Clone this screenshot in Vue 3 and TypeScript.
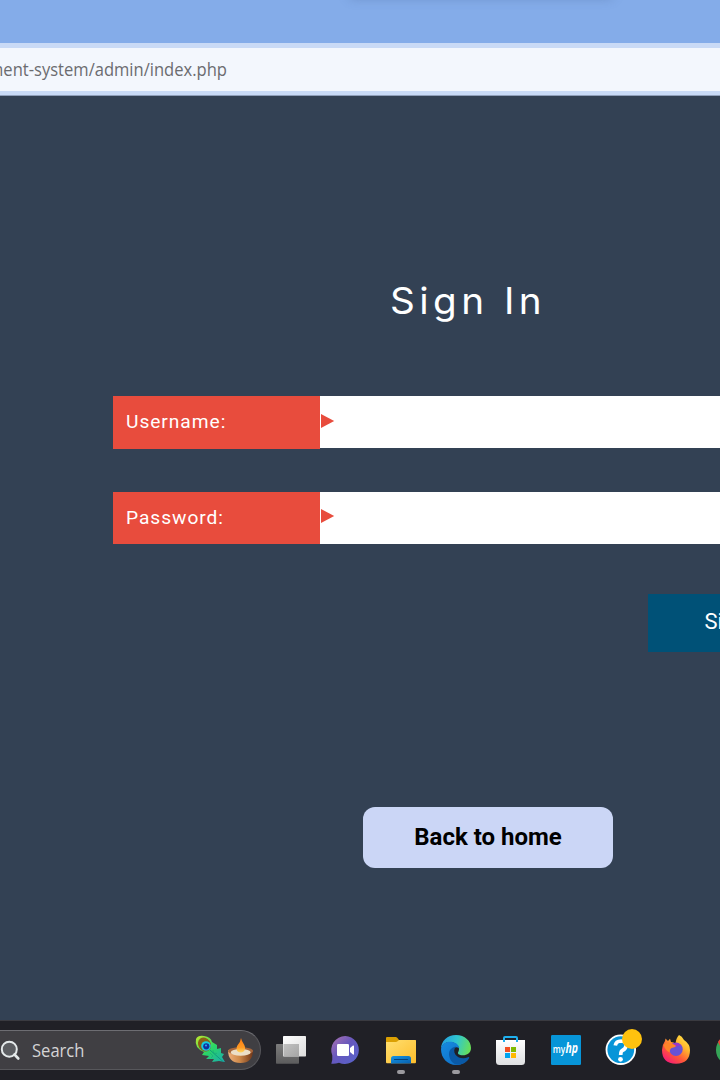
<script setup lang="ts">
interface Field {
  id: string
  label: string
}

const fields: Field[] = [
  { id: 'username', label: 'Username:' },
  { id: 'password', label: 'Password:' },
]
const url = 'ment-system/admin/index.php'
</script>

<template>
  <div class="screen">
    <header class="browser">
      <div class="tabs"><div class="tab-shadow"></div></div>
      <div class="address"><span class="url">{{ url }}</span></div>
    </header>

    <main class="page">
      <h1 class="title">Sign In</h1>
      <form class="form">
        <div v-for="f in fields" :key="f.id" class="field" :class="f.id">
          <label class="label">{{ f.label }}</label>
          <div class="input">
            <svg class="arrow" width="14" height="14" viewBox="0 0 14 14"><path d="M0 0L13.2 7L0 14Z" fill="#e84c3d" /></svg>
          </div>
        </div>
        <div class="submit">Sign In</div>
      </form>
      <div class="home">Back to home</div>
    </main>

    <footer class="taskbar">
      <div class="search">
        <svg class="lens" width="22" height="22" viewBox="0 0 22 22">
          <circle cx="9.3" cy="9.2" r="7.5" fill="#5b5d61" stroke="#e4e9ea" stroke-width="2" />
          <path d="M14.5 14.5L18.3 18.5" stroke="#e4e9ea" stroke-width="2.6" stroke-linecap="round" />
        </svg>
        <span class="search-text">Search</span>
        <svg class="festive" width="60" height="32" viewBox="194 1034 60 32">
          <defs>
            <linearGradient id="feather" x1="0" y1="0" x2="1" y2="1">
              <stop offset="0" stop-color="#c3e82a" /><stop offset=".5" stop-color="#2bd765" /><stop offset="1" stop-color="#1aa9b0" />
            </linearGradient>
            <linearGradient id="bowl" x1="0" y1="0" x2="1" y2="0">
              <stop offset="0" stop-color="#eeb07c" /><stop offset=".45" stop-color="#cf8a4b" /><stop offset="1" stop-color="#713719" />
            </linearGradient>
            <linearGradient id="flame" x1="0" y1="0" x2="0" y2="1">
              <stop offset="0" stop-color="#ff7a10" /><stop offset=".65" stop-color="#ff9a24" /><stop offset="1" stop-color="#ffd862" />
            </linearGradient>
          </defs>
          <path d="M196 1039Q198 1035 204 1036Q211 1037 212 1042L217 1045L217 1049L221 1048L221 1053L224 1054L222 1057L225 1062L219 1061L212 1062L214 1059L206 1059L209 1056L202 1055L204 1052Q194 1048 196 1039Z" fill="url(#feather)" />
          <path d="M210 1050L223 1061.5" stroke="#0c9a7c" stroke-width=".9" fill="none" />
          <path d="M213 1050L213.5 1053L217 1053.5M210 1053L213 1056L211 1058" stroke="#17a878" stroke-width=".6" fill="none" />
          <ellipse cx="204.5" cy="1044.5" rx="6.2" ry="7.2" transform="rotate(-35 204.5 1044.5)" fill="#8a5f16" />
          <circle cx="206" cy="1046" r="4.8" fill="#16cbe0" />
          <circle cx="206.3" cy="1046.3" r="3.1" fill="#132d9c" />
          <circle cx="206" cy="1045.5" r="1.1" fill="#28a5eb" />
          <path d="M228 1050Q228 1063 240.5 1063Q253 1063 253 1050Z" fill="url(#bowl)" />
          <ellipse cx="240.5" cy="1051" rx="12.5" ry="3.8" fill="#a8663a" />
          <ellipse cx="240.7" cy="1052.4" rx="10" ry="3.3" fill="#ecdfc8" />
          <path d="M241 1038Q241.8 1041.5 244 1044.5C246.500 1048.500 244.500 1052.500 240.8 1052.500C236.500 1052.500 235.500 1048.500 237.700 1045Q240.5 1042 241 1038Z" fill="url(#flame)" />
        </svg>
      </div>

      <svg class="app" viewBox="0 0 55 60">
        <defs>
          <linearGradient id="pane" x1="0" y1="0" x2="1" y2="1"><stop stop-color="#fff" /><stop offset="1" stop-color="#dcdcdc" /></linearGradient>
          <linearGradient id="paneBack" x1="0" y1="0" x2="0" y2="1"><stop stop-color="#7c7c7c" /><stop offset="1" stop-color="#5c5c5d" /></linearGradient>
          <linearGradient id="overlap" x1="0" y1="0" x2="1" y2="1"><stop stop-color="#c2c2c2" /><stop offset="1" stop-color="#a6a6a6" /></linearGradient>
        </defs>
        <rect x="12" y="24" width="23" height="19.7" rx=".7" fill="url(#paneBack)" />
        <rect x="19" y="16" width="23" height="20.5" rx=".7" fill="url(#pane)" />
        <path d="M19.5 24H35V36H19.5Z" fill="url(#overlap)" />
      </svg>

      <svg class="app" viewBox="0 0 55 60">
        <defs><linearGradient id="chat" x1="0" y1="0" x2="1" y2="1"><stop stop-color="#b073b0" /><stop offset=".45" stop-color="#6657bd" /><stop offset="1" stop-color="#5664cb" /></linearGradient></defs>
        <path d="M26.3 16A14 14 0 1 1 20 42.7Q16 44.2 12.3 43.7Q13.7 40.5 13.3 35.4A14 14 0 0 1 26.3 16Z" fill="url(#chat)" />
        <rect x="18" y="24" width="12" height="12" rx="1.3" fill="#fff" />
        <path d="M31 28L34 25.5Q35 25.2 35 26V34Q35 35 34 34.5L31 32Z" fill="#fff" />
      </svg>

      <svg class="app" viewBox="0 0 55 60">
        <defs>
          <linearGradient id="folder" x1="0" y1="0" x2="1" y2="1"><stop stop-color="#ffdf70" /><stop offset="1" stop-color="#fdbd2b" /></linearGradient>
          <linearGradient id="dock" x1="0" y1="0" x2="1" y2="1"><stop stop-color="#1594e3" /><stop offset="1" stop-color="#0860ae" /></linearGradient>
        </defs>
        <path d="M12 18Q12 17 13 17H22Q23 17 25 20H41Q42 20 42 21V30H12Z" fill="#dba003" />
        <path d="M12 22H22Q23 22 25 20H41Q42 20 42 21V42Q42 43.3 41 43.3H13Q12 43.3 12 42Z" fill="url(#folder)" />
        <path d="M17 43.5V38.5Q17 36 19.5 36H34.5Q37 36 37 38.5V43.5Z" fill="url(#dock)" />
        <path d="M20.5 39.5H33.5" stroke="#06427b" stroke-width="1" stroke-linecap="round" />
        <rect x="23" y="50" width="8" height="4" rx="2" fill="#9b9a9f" />
      </svg>

      <svg class="app" viewBox="0 0 55 60">
        <defs>
          <linearGradient id="edgeTop" x1="0" y1=".3" x2="1" y2=".5"><stop stop-color="#239ee0" /><stop offset=".5" stop-color="#30c6d0" /><stop offset="1" stop-color="#67df59" /></linearGradient>
          <linearGradient id="edgeLeft" x1="0" y1="0" x2=".8" y2="1"><stop stop-color="#168be0" /><stop offset="1" stop-color="#0f6fc6" /></linearGradient>
        </defs>
        <path d="M12 29C12 21 18.5 15 27 15C36 15 42 21 42 28C42 33 38 35.3 34 35.3C29.5 35.3 28 33.5 29.5 31.5C31.5 28 28 22 21 22C16 22 13 25 12 29Z" fill="url(#edgeTop)" />
        <path d="M12 29C13 24 16.5 21.8 21 21.8C25.5 21.8 29.5 24 30.3 28C26 25.8 23.7 28.5 23.7 31.5C23.7 37 29 42 36 42.2C33 44.2 30.5 45 27 45C18.5 45 12 38.2 12 29Z" fill="url(#edgeLeft)" />
        <path d="M27 26.5C21.5 27.5 19.5 31 20.2 36C21 41 25 44.8 29 44.8C34.5 44.3 38 42 40.2 38C40.5 37 40 36.8 39 37.2C34.5 39.3 29.3 38.2 26.5 34.7C24.7 32 24.7 29 27 26.5Z" fill="#0a59a6" />
        <rect x="23" y="50" width="8" height="4" rx="2" fill="#9b9a9f" />
      </svg>

      <svg class="app" viewBox="0 0 55 60">
        <defs><linearGradient id="bag" x1="0" y1="0" x2="0" y2="1"><stop stop-color="#fff" /><stop offset="1" stop-color="#dedfe1" /></linearGradient></defs>
        <path d="M12 20H41V41.5Q41 45 37.5 45H15.5Q12 45 12 41.5Z" fill="url(#bag)" />
        <path d="M20 22V18Q20 17 21 17H32Q33 17 33 18V22" fill="none" stroke="#1fb0ee" stroke-width="2" />
        <path d="M21 27H26V32H21Z" fill="#f25022" /><path d="M27 27H32V32H27Z" fill="#7fba00" />
        <path d="M21 33H26V38H21Z" fill="#00a4ef" /><path d="M27 33H32V38H27Z" fill="#ffb900" />
      </svg>

      <svg class="app" viewBox="0 0 55 60">
        <rect x="12" y="15" width="30" height="30" rx="1.2" fill="#0795d8" />
        <text x="13.7" y="33" class="my" textLength="12.5" lengthAdjust="spacingAndGlyphs">my</text>
        <text x="26.5" y="33.3" class="hp" textLength="12.5" lengthAdjust="spacingAndGlyphs">hp</text>
      </svg>

      <svg class="app" viewBox="0 0 55 60">
        <circle cx="26.8" cy="29.7" r="15.2" fill="#fff" />
        <circle cx="26.8" cy="29.7" r="13.4" fill="#0795d8" />
        <path d="M21.3 25.5Q22 21 27 21Q32.5 21.2 32 26Q31.7 28.8 28.7 30.2Q26.7 31.2 26.7 35" fill="none" stroke="#fff" stroke-width="3.7" />
        <circle cx="26.5" cy="39.3" r="2.4" fill="#fff" />
        <circle cx="38" cy="19" r="10" fill="#ffc20e" />
      </svg>

      <svg class="app" viewBox="0 0 55 60">
        <defs>
          <linearGradient id="fox" x1="1" y1="0" x2=".25" y2="1"><stop stop-color="#fff44f" /><stop offset=".38" stop-color="#ffb62d" /><stop offset=".68" stop-color="#ff5a36" /><stop offset="1" stop-color="#f51b76" /></linearGradient>
        </defs>
        <path d="M30 15Q33 16 35 20Q41 24 41 30Q41 43.5 27 43.8Q13 43.5 13 30Q13 25 16 21L16.5 18.5L19 21L21 18.8L22 22Q25 22 26.5 24Q27 18 30 15Z" fill="url(#fox)" />
        <circle cx="27" cy="29.2" r="6.7" fill="#6852d5" />
        <path d="M23 23.5Q29 21.5 33 26Q29.5 24.8 27 27Z" fill="#9d35c8" />
        <path d="M14.5 25Q18 21 24 24L27.2 26Q26 27.7 22.5 28Q20 30 21 32.5Q16.5 31 14.5 25Z" fill="#ff8428" />
      </svg>

      <svg class="app" viewBox="0 0 55 60">
        <circle cx="27" cy="30" r="15" fill="#35a457" />
        <path d="M14 22A15 15 0 0 1 40 22H27L20 34Z" fill="#e84235" />
      </svg>
    </footer>
  </div>
</template>

<style>
body {
  overflow: hidden;
}
</style>

<style scoped>
.screen {
  width: 720px;
  height: 1080px;
  overflow: hidden;
  display: flex;
  flex-direction: column;
  background: #334154;
  font-family: Roboto, "Liberation Sans", sans-serif;
}
.browser {
  height: 95px;
  flex: none;
  background: #c9daf6;
  border-bottom: 1px solid #8f9fba;
}
.tabs {
  height: 43px;
  background: #84ace9;
  overflow: hidden;
}
.tab-shadow {
  width: 262px;
  height: 10px;
  margin-left: 350px;
  margin-top: -12px;
  box-shadow: 0 0 11px rgba(70, 100, 150, 0.4);
}
.address {
  height: 43px;
  margin-top: 5px;
  background: #f3f7fd;
  display: flex;
  align-items: center;
  overflow: hidden;
}
.url {
  font: 18px/24px "Open Sans", sans-serif;
  color: #6b6c70;
  white-space: nowrap;
  margin-left: -12.5px;
  margin-top: -2px;
  transform: scaleX(0.92);
  transform-origin: left;
}
.page {
  height: 924px;
  flex: none;
}
.title {
  width: 170px;
  margin: 182px 0 0 390px;
  height: 46px;
  font: 400 36.5px/46px Inter, sans-serif;
  letter-spacing: 4.2px;
  color: #fff;
  white-space: nowrap;
  transform: scaleX(1.06);
  transform-origin: left;
}
.form {
  margin: 72px 0 0 113px;
}
.field {
  display: flex;
  align-items: flex-start;
}
.label {
  width: 194px;
  height: 53px;
  padding-left: 13px;
  background: #e84c3d;
  color: #fff;
  font-size: 19.2px;
  line-height: 51px;
  letter-spacing: 0.95px;
}
.input {
  flex: 1;
  height: 52px;
  background: #fff;
}
.arrow {
  display: block;
  margin: 18px 0 0 1px;
}
.password {
  margin-top: 43px;
}
.password .label {
  height: 52px;
}
.password .arrow {
  margin-top: 17px;
}
.submit {
  width: 180px;
  height: 58px;
  margin: 50px 0 0 535px;
  padding-left: 56.5px;
  box-sizing: border-box;
  background: #005177;
  color: #fff;
  font-size: 22px;
  line-height: 56px;
}
.home {
  width: 250px;
  height: 61px;
  margin: 155px 0 0 363px;
  border-radius: 12px;
  background: #cbd6f6;
  color: #000;
  font-weight: 700;
  font-size: 24px;
  line-height: 60px;
  text-align: center;
}
.taskbar {
  height: 60px;
  flex: none;
  display: flex;
  background: linear-gradient(#3a3a40 0 1px, #202026 1px);
}
.search {
  box-sizing: border-box;
  flex: none;
  width: 281px;
  height: 40px;
  margin: 10px 3px 0 -20px;
  border: 1px solid #57575b;
  border-top-color: #6d6d72;
  border-radius: 20px;
  background: #403f43;
  display: flex;
  align-items: center;
}
.lens {
  margin-left: 19px;
  margin-top: 2px;
  flex: none;
}
.search-text {
  width: 162px;
  margin-left: 10px;
  font: 18px/24px "Open Sans", sans-serif;
  color: #d4d4d5;
  transform: scaleX(0.92);
  transform-origin: left;
}
.festive {
  flex: none;
}
.app {
  width: 55px;
  height: 60px;
  flex: none;
}
.my {
  font: 600 10px "Open Sans", sans-serif;
  fill: #fff;
}
.hp {
  font: italic 700 15px "Open Sans", sans-serif;
  fill: #fff;
}
</style>
